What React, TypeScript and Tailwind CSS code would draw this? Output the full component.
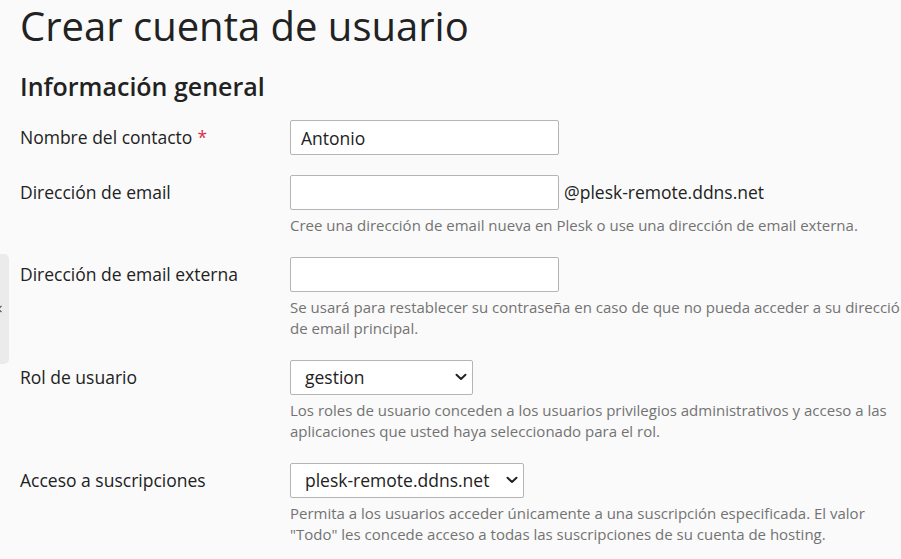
import { useState } from "react";

const font = { fontFamily: '"Open Sans", "Liberation Sans", sans-serif' };

function Chevron() {
  return (
    <svg
      width="12"
      height="8"
      viewBox="0 0 12 8"
      className="pointer-events-none absolute right-[6px] top-1/2 -translate-y-1/2"
    >
      <path d="M1.5 1.8 L6 6 L10.5 1.8" fill="none" stroke="#222" strokeWidth="2" strokeLinecap="round" strokeLinejoin="round" />
    </svg>
  );
}

function Row({
  label,
  required,
  hint,
  children,
}: {
  label: string;
  required?: boolean;
  hint?: React.ReactNode;
  children: React.ReactNode;
}) {
  return (
    <div className="flex mb-[20px]">
      <div className="w-[270px] shrink-0 pt-[5px] text-[17.5px] leading-[25px] text-[#222]">
        {label}
        {required && <span className="ml-[5px] text-[#d6314b]">*</span>}
      </div>
      <div className="min-w-0 flex-1">
        {children}
        {hint && (
          <p className="mt-[5px] whitespace-nowrap text-[15px] leading-[21.5px] text-[#737373]">{hint}</p>
        )}
      </div>
    </div>
  );
}

const inputCls =
  "block h-[35px] w-[269px] rounded-[2px] border border-[#b5b5b5] bg-white px-[10px] text-[17.5px] text-[#222] outline-none";

const selectCls =
  "block h-[35px] w-full appearance-none rounded-[2px] border border-[#b5b5b5] bg-white pl-[14px] text-[17.5px] text-[#222] outline-none";

export default function App() {
  const [name, setName] = useState("Antonio");

  return (
    <div style={font} className="relative h-[559px] w-[901px] overflow-hidden bg-[#fafafa]">
      {/* collapsed sidebar handle */}
      <div className="absolute left-0 top-[254px] flex h-[110px] w-[9px] items-center overflow-hidden rounded-r-[5px] bg-[#ebebeb]">
        <svg width="6" height="8" viewBox="0 0 6 8" className="-ml-[3px]">
          <path d="M4.5 0.8 L1.5 4 L4.5 7.2" fill="none" stroke="#555" strokeWidth="1.2" />
        </svg>
      </div>

      <div className="pl-[20px]">
        <h1 className="pt-[1px] text-[40px] leading-[50px] font-normal text-[#222]">Crear cuenta de usuario</h1>
        <h2 className="mt-[19px] text-[25px] leading-[32px] font-semibold text-[#222]">Información general</h2>

        <div className="mt-[18px]">
          <Row label="Nombre del contacto" required>
            <input className={inputCls} value={name} onChange={(e) => setName(e.target.value)} />
          </Row>

          <Row label="Dirección de email" hint="Cree una dirección de email nueva en Plesk o use una dirección de email externa.">
            <div className="flex items-center">
              <input className={inputCls} />
              <span className="ml-[5px] text-[17.5px] text-[#222]">@plesk-remote.ddns.net</span>
            </div>
          </Row>

          <Row
            label="Dirección de email externa"
            hint={
              <>
                Se usará para restablecer su contraseña en caso de que no pueda acceder a su dirección
                <br />
                de email principal.
              </>
            }
          >
            <input className={inputCls} />
          </Row>

          <Row
            label="Rol de usuario"
            hint={
              <>
                Los roles de usuario conceden a los usuarios privilegios administrativos y acceso a las
                <br />
                aplicaciones que usted haya seleccionado para el rol.
              </>
            }
          >
            <div className="relative w-[183px]">
              <select className={selectCls}>
                <option>gestion</option>
              </select>
              <Chevron />
            </div>
          </Row>

          <Row
            label="Acceso a suscripciones"
            hint={
              <>
                Permita a los usuarios acceder únicamente a una suscripción especificada. El valor
                <br />
                "Todo" les concede acceso a todas las suscripciones de su cuenta de hosting.
              </>
            }
          >
            <div className="relative w-[234px]">
              <select className={selectCls}>
                <option>plesk-remote.ddns.net</option>
              </select>
              <Chevron />
            </div>
          </Row>
        </div>
      </div>
    </div>
  );
}
